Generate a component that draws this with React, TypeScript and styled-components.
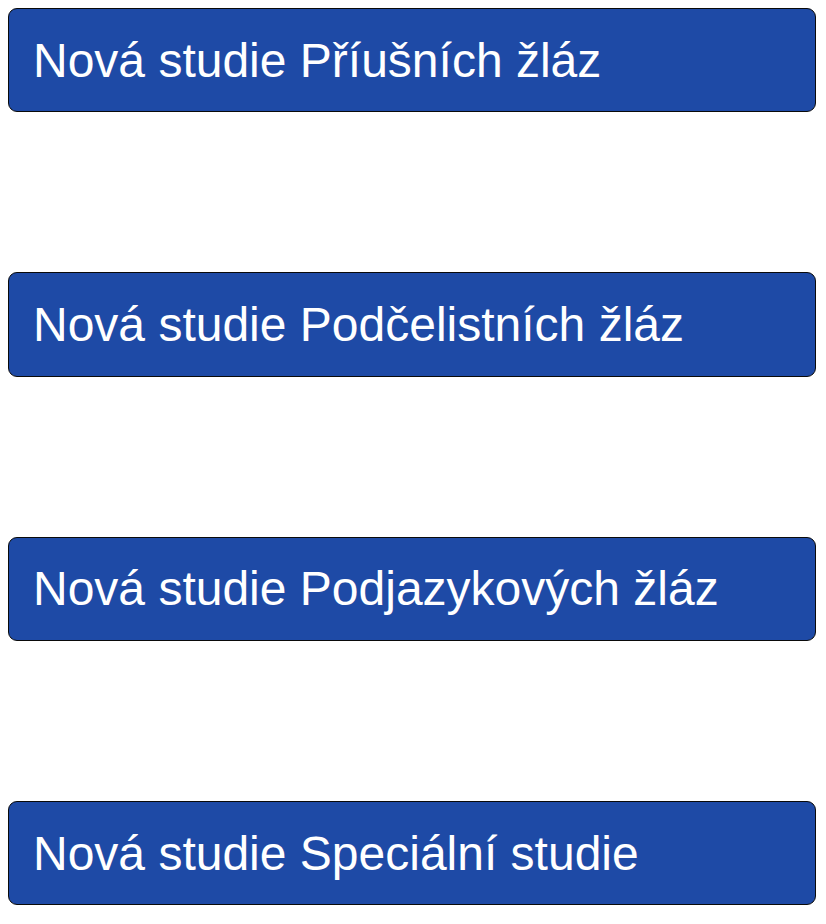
import styled, { createGlobalStyle } from "styled-components";

const GlobalStyle = createGlobalStyle`
  body {
    margin: 8px;
    background: #ffffff;
    font-family: "Liberation Sans", Arial, sans-serif;
  }
`;

const List = styled.div`
  display: flex;
  flex-direction: column;
  gap: 160px;
`;

const StudyButton = styled.button`
  box-sizing: border-box;
  width: 808px;
  height: 104.33px;
  display: flex;
  align-items: center;
  padding: 0 24px;
  background-color: #1e4aa6;
  color: #ffffff;
  border: 1px solid #0a0a0a;
  border-radius: 9px;
  font-family: "Liberation Sans", Arial, sans-serif;
  font-size: 48px;
  text-align: left;
  cursor: pointer;
`;

const studies = [
  "Nová studie Příušních žláz",
  "Nová studie Podčelistních žláz",
  "Nová studie Podjazykových žláz",
  "Nová studie Speciální studie",
];

const App: React.FC = () => {
  return (
    <>
      <GlobalStyle />
      <List>
        {studies.map((s) => (
          <StudyButton key={s}>{s}</StudyButton>
        ))}
      </List>
    </>
  );
};

export default App;
